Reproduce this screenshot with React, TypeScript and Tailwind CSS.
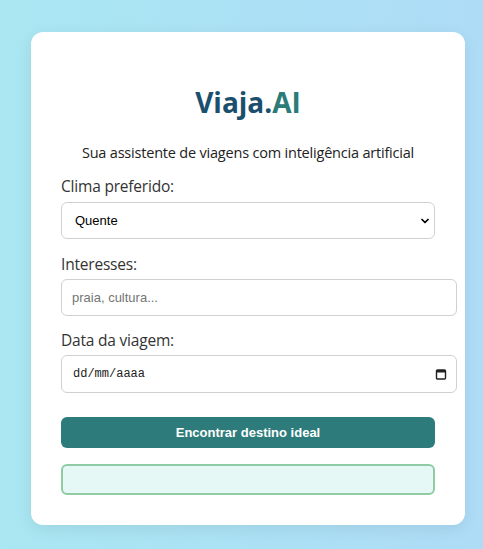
import { ChevronDown } from 'lucide-react';

const CalendarIcon = () => (
  <svg width="12" height="12" viewBox="0 0 12 12" fill="none">
    <rect x="1.5" y="2" width="9" height="9" rx="1" stroke="#222" strokeWidth="1.4" />
    <rect x="1.5" y="2" width="9" height="2.5" fill="#222" />
  </svg>
);

const App = () => {
  return (
    <div className="min-h-[549px] w-full bg-gradient-to-r from-[#a9e7f2] to-[#aedcf7] pt-[32px] pb-[25px] font-['Open_Sans',sans-serif]">
      <div className="ml-[31px] w-[434px] rounded-[12px] bg-white px-[30px] pt-[30px] pb-[30px] shadow-[0_4px_16px_rgba(0,0,0,0.08)]">
        {/* Header */}
        <h1 className="mt-[22px] text-center text-[28px] font-bold leading-[37px] text-[#1b4f6e]">
          Viaja.<span className="text-[#2b7b78]">AI</span>
        </h1>
        <p className="mt-[22px] text-center text-[14.5px] leading-[20px] tracking-[-0.2px] text-[#222]">
          Sua assistente de viagens com inteligência artificial
        </p>

        {/* Clima */}
        <label className="mt-[13px] block text-[15.5px] leading-[21px] tracking-[-0.2px] text-[#333]">Clima preferido:</label>
        <div className="relative mt-[5px] w-[374px]">
          <select
            defaultValue="Quente"
            className="h-[37px] w-full appearance-none rounded-[6px] border border-[#d0d0d0] bg-white pl-[13px] font-['Liberation_Sans',Arial,sans-serif] text-[13px] text-black outline-none"
          >
            <option>Quente</option>
            <option>Frio</option>
            <option>Ameno</option>
          </select>
          <ChevronDown
            size={12}
            strokeWidth={3.5}
            className="pointer-events-none absolute right-[4px] top-[13px] text-black"
          />
        </div>

        {/* Interesses */}
        <label className="mt-[15px] block text-[15.5px] leading-[21px] tracking-[-0.2px] text-[#333]">Interesses:</label>
        <input
          type="text"
          placeholder="praia, cultura..."
          className="mt-[4px] h-[37px] w-[396px] rounded-[6px] border border-[#d0d0d0] bg-white px-[10px] font-['Liberation_Sans',Arial,sans-serif] text-[13px] text-black outline-none placeholder:text-[#757575]"
        />

        {/* Data */}
        <label className="mt-[14px] block text-[15.5px] leading-[21px] tracking-[-0.2px] text-[#333]">Data da viagem:</label>
        <div className="relative mt-[4px] w-[396px]">
          <input
            type="text"
            placeholder="dd/mm/aaaa"
            className="h-[38px] w-full rounded-[6px] border border-[#d0d0d0] bg-white px-[11px] font-['Liberation_Mono',monospace] text-[12px] text-black outline-none placeholder:text-[#222]"
          />
          <span className="pointer-events-none absolute right-[10px] top-[13px]">
            <CalendarIcon />
          </span>
        </div>

        {/* Ação */}
        <button className="mt-[24px] h-[31px] w-[374px] rounded-[6px] bg-[#2d7b7b] font-['Liberation_Sans',Arial,sans-serif] text-[13px] font-bold text-white">
          Encontrar destino ideal
        </button>

        {/* Resultado */}
        <div className="mt-[16px] h-[31px] w-[374px] rounded-[6px] border-2 border-[#8fcca4] bg-[#e6f8f6]" />
      </div>
    </div>
  );
};

export default App;
